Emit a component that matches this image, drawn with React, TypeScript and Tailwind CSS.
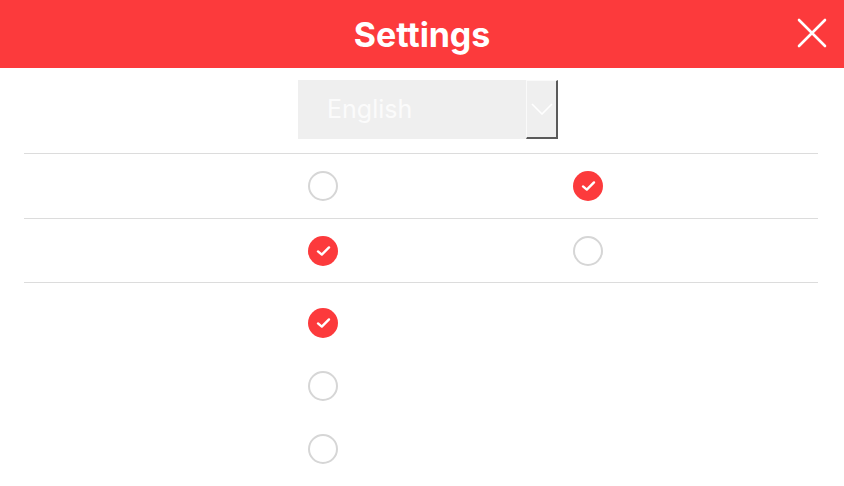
import { useState } from "react";

function Radio({ checked, onClick }: { checked: boolean; onClick?: () => void }) {
  if (checked) {
    return (
      <button
        onClick={onClick}
        className="flex h-[30px] w-[30px] shrink-0 items-center justify-center rounded-full bg-[#fc3a3c]"
      >
        <svg width="15" height="12" viewBox="0 0 15 12" fill="none">
          <path
            d="M2 6.4 L5.8 9.6 L13 2.4"
            stroke="white"
            strokeWidth="2.4"
            strokeLinecap="round"
            strokeLinejoin="round"
          />
        </svg>
      </button>
    );
  }
  return (
    <button
      onClick={onClick}
      className="h-[30px] w-[30px] shrink-0 rounded-full border-2 border-[#d6d6d6] bg-white"
    />
  );
}

export default function App() {
  const [rowA, setRowA] = useState(1);
  const [rowB, setRowB] = useState(0);
  const [list, setList] = useState(0);

  return (
    <div className="min-h-screen bg-white font-['Inter','Liberation_Sans',sans-serif]">
      {/* HEADER */}
      <header className="relative flex h-[68px] items-center justify-center bg-[#fc3a3c]">
        <h1 className="text-[34px] font-bold tracking-[-0.1px] text-white">Settings</h1>
        <button className="absolute right-[17px] top-[18px] h-[30px] w-[30px]">
          <svg width="30" height="30" viewBox="0 0 30 30" fill="none">
            <path d="M2 2 L28 28 M28 2 L2 28" stroke="white" strokeWidth="2.6" strokeLinecap="round" />
          </svg>
        </button>
      </header>

      <div className="pl-[24px] pr-[26px]">
        {/* LANGUAGE */}
        <div className="h-[86px] border-b border-[#dcdcdc] pt-3">
          <div className="ml-[274px] flex h-[59px] w-[260px]">
            <div className="flex flex-1 items-center bg-[#efefef] pl-[29px] text-[25px] text-[#fbfbfb]">
              English
            </div>
            <div className="flex w-[32px] items-center justify-center border-b-2 border-l border-r-2 border-t border-b-[#5a5a5a] border-l-[#fafafa] border-r-[#5a5a5a] border-t-[#fafafa] bg-[#efefef]">
              <svg width="22" height="12" viewBox="0 0 22 12" fill="none">
                <path d="M1 1 L11 11 L21 1" stroke="white" strokeWidth="1.6" />
              </svg>
            </div>
          </div>
        </div>

        {/* ROW A */}
        <div className="flex h-[65px] items-center border-b border-[#dcdcdc]">
          <div className="ml-[284px] flex items-center gap-[235px]">
            <Radio checked={rowA === 0} onClick={() => setRowA(0)} />
            <Radio checked={rowA === 1} onClick={() => setRowA(1)} />
          </div>
        </div>

        {/* ROW B */}
        <div className="flex h-[64px] items-center border-b border-[#dcdcdc]">
          <div className="ml-[284px] flex items-center gap-[235px]">
            <Radio checked={rowB === 0} onClick={() => setRowB(0)} />
            <Radio checked={rowB === 1} onClick={() => setRowB(1)} />
          </div>
        </div>

        {/* LIST */}
        <div className="ml-[284px] flex flex-col gap-[33px] pt-[25px]">
          {[0, 1, 2].map((i) => (
            <Radio key={i} checked={list === i} onClick={() => setList(i)} />
          ))}
        </div>
      </div>
    </div>
  );
}
